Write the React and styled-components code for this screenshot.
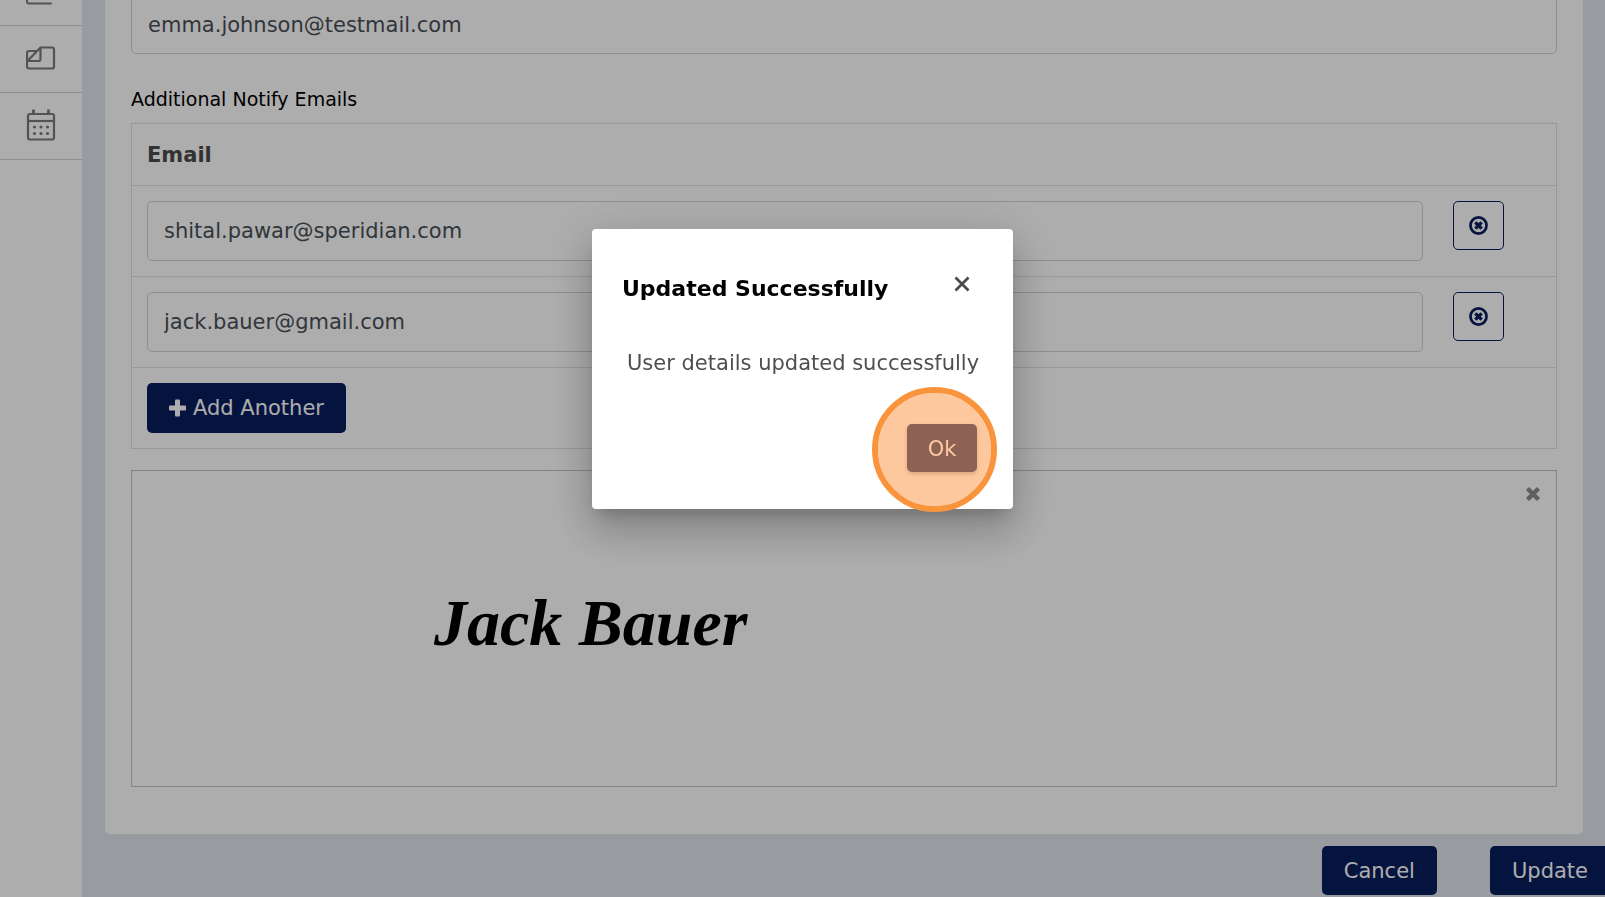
import { useState } from "react";
import styled, { createGlobalStyle } from "styled-components";

const GlobalStyle = createGlobalStyle`
    *{
        box-sizing: border-box;
    }

    body{
        margin: 0;
        overflow: hidden;
        font-family: Verdana, "DejaVu Sans", sans-serif;
        font-size: 21px;
        color: #495057;
        background-color: #e1e5ec;
    }

    button, input{
        font: inherit;
    }
`;

const Page = styled.div`
    display: flex;
    height: 100vh;
    overflow: hidden;
`;

const Sidebar = styled.nav`
    flex: 0 0 82px;
    background-color: #fff;
`;

const SideLink = styled.a`
    display: flex;
    align-items: ${({ $cut }) => ($cut ? "flex-end" : "center")};
    justify-content: center;
    height: ${({ $cut }) => ($cut ? "26px" : "67px")};
    padding-bottom: ${({ $cut }) => ($cut ? "20px" : "2px")};
    border-bottom: 1px solid #d0d3d6;
    color: #7b7b7b;
    overflow: hidden;
`;

const Main = styled.main`
    flex: 1;
    min-width: 0;
    padding: 0 22px 0 23px;
`;

const Card = styled.form`
    padding: 0 26px 47px;
    border-radius: 0 0 5px 5px;
    background-color: #fff;
`;

const TextInput = styled.input`
    display: block;
    width: 100%;
    height: 60px;
    padding: 0 16px;
    border: 1px solid #ced4da;
    border-radius: 5px;
    color: #495057;
    background-color: #fff;
`;

const TopInput = styled(TextInput)`
    height: 54px;
    padding-bottom: 4px;
    border-top: 0;
    border-radius: 0 0 5px 5px;
`;

const Label = styled.h2`
    margin: 32px 0 11px;
    font-size: 19px;
    font-weight: 400;
    line-height: 26px;
    color: #000;
`;

const EmailTable = styled.table`
    width: 100%;
    border: 1px solid #dee2e6;
    border-collapse: collapse;
`;

const HeadCell = styled.th`
    height: 62px;
    padding: 0 15px;
    text-align: left;
    color: #4b4b4b;
`;

const Row = styled.tr`
    border-top: 1px solid #dee2e6;
`;

const Cell = styled.td`
    width: ${({ $narrow }) => ($narrow ? "119px" : "auto")};
    padding: 15px;
    vertical-align: top;
`;

const Button = styled.button`
    display: inline-flex;
    align-items: center;
    justify-content: center;
    gap: 7px;
    height: ${({ $tall }) => ($tall ? "50px" : "49px")};
    padding: 0 22px;
    border: 0;
    border-radius: 5px;
    color: #fff;
    background-color: #081d5e;
    white-space: nowrap;
`;

const RemoveButton = styled.button`
    display: flex;
    align-items: center;
    justify-content: center;
    width: 51px;
    height: 49px;
    padding: 0;
    border: 1px solid #081d5e;
    border-radius: 5px;
    color: #081d5e;
    background-color: transparent;
`;

const SignaturePad = styled.section`
    display: flex;
    flex-direction: column;
    height: 317px;
    margin-top: 21px;
    border: 1px solid #c4c4c4;
`;

const ClearButton = styled.button`
    display: flex;
    align-self: flex-end;
    margin: 15px;
    padding: 0;
    border: 0;
    color: #8c8c8c;
    background-color: transparent;
`;

const Signature = styled.p`
    margin: 64px 0 0 302px;
    font-family: "Liberation Serif", serif;
    font-size: 66px;
    font-style: italic;
    font-weight: 700;
    line-height: 84px;
    color: #000;
`;

const Footer = styled.footer`
    display: flex;
    justify-content: flex-end;
    gap: 53px;
    margin-right: -27px;
    padding-top: 12px;
`;

const Backdrop = styled.div`
    position: fixed;
    inset: 0;
    display: flex;
    align-items: flex-start;
    justify-content: center;
    padding-top: 229px;
    background-color: rgba(0, 0, 0, 0.32);
`;

const Dialog = styled.div`
    width: 421px;
    padding: 40px 36px 37px 30px;
    border-radius: 4px;
    background-color: #fff;
    box-shadow: 0 11px 15px -7px rgba(0, 0, 0, 0.2),
        0 24px 38px 3px rgba(0, 0, 0, 0.14),
        0 9px 46px 8px rgba(0, 0, 0, 0.12);
`;

const DialogHead = styled.div`
    display: flex;
    align-items: flex-start;
    justify-content: space-between;
    padding-right: 7px;
`;

const DialogTitle = styled.h1`
    margin: 0;
    padding-top: 5px;
    font-size: 22px;
    font-weight: 700;
    line-height: 30px;
    color: #000;
`;

const CloseButton = styled.button`
    display: flex;
    padding: 7px 0;
    border: 0;
    color: #4b4b4b;
    background-color: transparent;
`;

const DialogText = styled.p`
    margin: 44px 0 46px;
    padding-left: 5px;
    line-height: 30px;
    color: #4f4f4f;
    white-space: nowrap;
`;

const DialogActions = styled.div`
    display: flex;
    justify-content: flex-end;
`;

const OkWrap = styled.div`
    position: relative;
`;

const OkButton = styled(Button)`
    width: 70px;
    height: 48px;
    padding: 1px 0 0;
    box-shadow: 0 2px 4px rgba(0, 0, 0, 0.3);
`;

const ClickMarker = styled.span`
    position: absolute;
    top: -37px;
    left: -35px;
    width: 125px;
    height: 125px;
    border: 6px solid #f9943d;
    border-radius: 50%;
    background-color: rgba(252, 155, 78, 0.55);
    background-clip: padding-box;
    pointer-events: none;
`;

function LineIcon(){
    return(
        <svg width="30" height="20" viewBox="0 0 30 20" fill="none" stroke="currentColor" strokeWidth="2" strokeLinecap="round">
            <path d="M1 0V16.500Q1 18.500 3 18.500H25"/>
        </svg>
    )
}

function FolderIcon(){
    return(
        <svg width="30" height="24" viewBox="0 0 30 24" fill="none" stroke="currentColor" strokeWidth="2.200" strokeLinejoin="round">
            <path d="M14.500 1.500H26Q28 1.500 28 3.500V20.500Q28 22.500 26 22.500H3Q1 22.500 1 20.500V7Q1 5 3 5H11.500"/>
            <path d="M14.500 1.500V13Q14.500 15 12.500 15H1.500L14.500 1.500Z"/>
        </svg>
    )
}

function CalendarIcon(){
    return(
        <svg width="30" height="32" viewBox="0 0 30 32" fill="none" stroke="currentColor" strokeWidth="2.200">
            <rect x="2" y="5" width="26" height="25.500" rx="2"/>
            <path d="M2 12H28"/>
            <path d="M7.500 0.500V5M22.500 0.500V5" strokeWidth="2.800"/>
            <g fill="currentColor" stroke="none">
                <circle cx="8.500" cy="18" r="1.600"/>
                <circle cx="15" cy="18" r="1.600"/>
                <circle cx="21.500" cy="18" r="1.600"/>
                <circle cx="8.500" cy="24.500" r="1.600"/>
                <circle cx="15" cy="24.500" r="1.600"/>
                <circle cx="21.500" cy="24.500" r="1.600"/>
            </g>
        </svg>
    )
}

function PlusIcon(){
    return(
        <svg width="17" height="18" viewBox="0 0 17 18" fill="currentColor">
            <rect x="0" y="6.500" width="17" height="5" rx="1"/>
            <rect x="6" y="0.500" width="5" height="17" rx="1"/>
        </svg>
    )
}

function CircleCrossIcon(){
    return(
        <svg width="19" height="19" viewBox="0 0 18 18" fill="none" stroke="currentColor">
            <circle cx="9" cy="9" r="7.600" strokeWidth="2.600"/>
            <path d="M6 6L12 12M12 6L6 12" strokeWidth="3.200"/>
        </svg>
    )
}

function HeavyCrossIcon(){
    return(
        <svg width="16" height="16" viewBox="0 0 16 16" stroke="currentColor" strokeWidth="4.500">
            <path d="M2.500 2.500L13.500 13.500M13.500 2.500L2.500 13.500"/>
        </svg>
    )
}

function CrossIcon(){
    return(
        <svg width="16" height="16" viewBox="0 0 16 16" stroke="currentColor" strokeWidth="2.800">
            <path d="M1.500 1.500L14.500 14.500M14.500 1.500L1.500 14.500"/>
        </svg>
    )
}

const notifyEmails = ["shital.pawar@speridian.com", "jack.bauer@gmail.com"];

export default function App(){
    const [isOpen, setIsOpen] = useState(true);
    const [emails, setEmails] = useState(notifyEmails);
    const [signature, setSignature] = useState("Jack Bauer");

    const handleChange = (index, value) => {
        setEmails(emails.map((email, i) => (i === index ? value : email)));
    };

    return(
        <>
            <GlobalStyle/>
            <Page>
                <Sidebar>
                    <SideLink href="#reports" aria-label="Reports" $cut><LineIcon/></SideLink>
                    <SideLink href="#files" aria-label="Files"><FolderIcon/></SideLink>
                    <SideLink href="#calendar" aria-label="Calendar"><CalendarIcon/></SideLink>
                </Sidebar>
                <Main>
                    <Card id="user" onSubmit={(e) => e.preventDefault()}>
                        <TopInput type="email" aria-label="Email" defaultValue="emma.johnson@testmail.com"/>
                        <Label id="notify">Additional Notify Emails</Label>
                        <EmailTable aria-labelledby="notify">
                            <thead>
                                <tr>
                                    <HeadCell colSpan={2}>Email</HeadCell>
                                </tr>
                            </thead>
                            <tbody>
                                {emails.map((email, i) => (
                                    <Row key={i}>
                                        <Cell>
                                            <TextInput
                                                type="email"
                                                aria-label="Notify email"
                                                value={email}
                                                onChange={(e) => handleChange(i, e.target.value)}
                                            />
                                        </Cell>
                                        <Cell $narrow>
                                            <RemoveButton
                                                type="button"
                                                aria-label="Remove"
                                                onClick={() => setEmails(emails.filter((_, n) => n !== i))}
                                            >
                                                <CircleCrossIcon/>
                                            </RemoveButton>
                                        </Cell>
                                    </Row>
                                ))}
                                <Row>
                                    <Cell colSpan={2}>
                                        <Button type="button" $tall onClick={() => setEmails([...emails, ""])}>
                                            <PlusIcon/>Add Another
                                        </Button>
                                    </Cell>
                                </Row>
                            </tbody>
                        </EmailTable>
                        <SignaturePad aria-label="Signature">
                            <ClearButton type="button" aria-label="Clear" onClick={() => setSignature("")}>
                                <HeavyCrossIcon/>
                            </ClearButton>
                            <Signature>{signature}</Signature>
                        </SignaturePad>
                    </Card>
                    <Footer>
                        <Button type="button">Cancel</Button>
                        <Button type="submit" form="user">Update</Button>
                    </Footer>
                </Main>
            </Page>
            {isOpen && (
                <Backdrop>
                    <Dialog role="dialog" aria-modal="true" aria-labelledby="dialog-title">
                        <DialogHead>
                            <DialogTitle id="dialog-title">Updated Successfully</DialogTitle>
                            <CloseButton type="button" aria-label="Close" onClick={() => setIsOpen(false)}>
                                <CrossIcon/>
                            </CloseButton>
                        </DialogHead>
                        <DialogText>User details updated successfully</DialogText>
                        <DialogActions>
                            <OkWrap>
                                <OkButton type="button" onClick={() => setIsOpen(false)}>Ok</OkButton>
                                <ClickMarker/>
                            </OkWrap>
                        </DialogActions>
                    </Dialog>
                </Backdrop>
            )}
        </>
    )
}
